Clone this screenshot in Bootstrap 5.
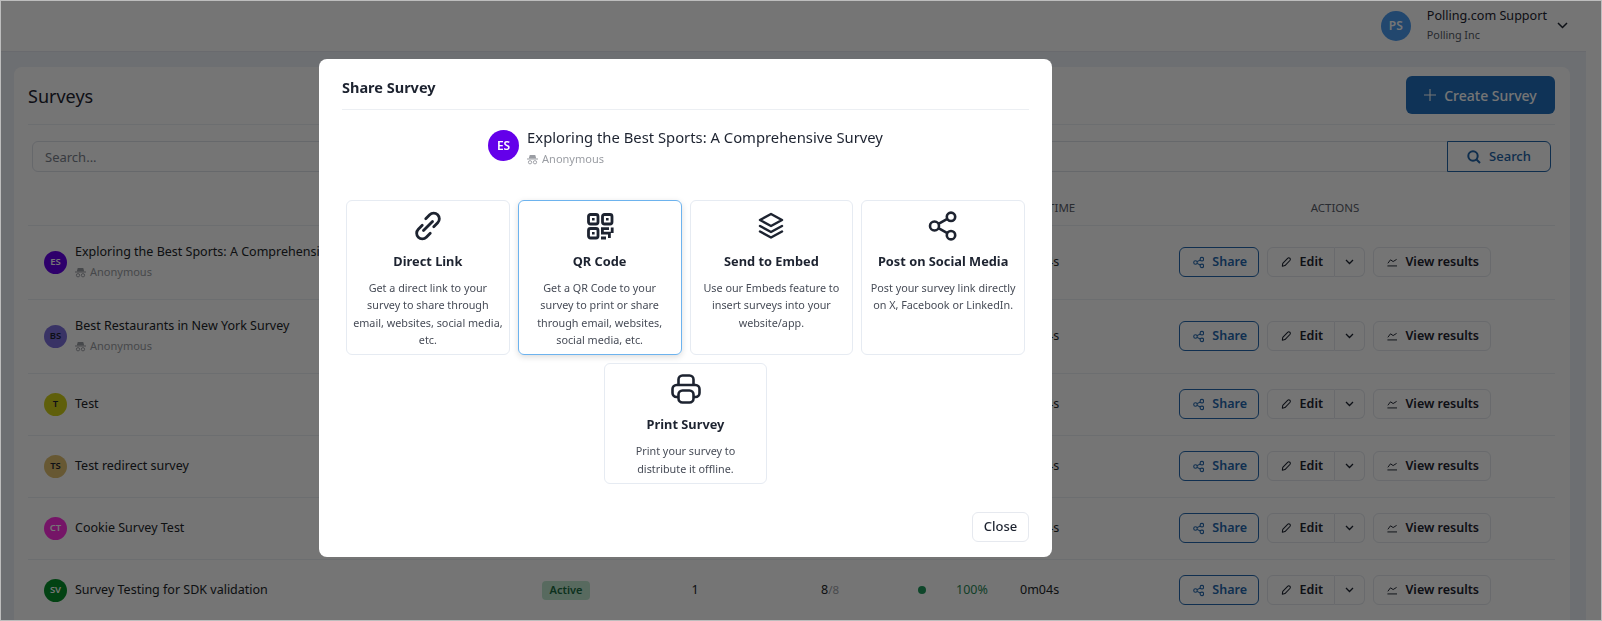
<!DOCTYPE html>
<html lang="en">
<head>
<meta charset="UTF-8">
<title>Surveys</title>
<link href="https://cdn.jsdelivr.net/npm/bootstrap@5.3.0/dist/css/bootstrap.min.css" rel="stylesheet">
<style>
    body {
        height: 621px;
        overflow: hidden;
        padding-right: 16px;
        background-color: #fff;
        color: #1d2330;
        font-family: "Noto Sans", sans-serif;
        font-size: 12.5px;
    }

    .topbar {
        height: 52px;
        padding-right: 18px;
        border-bottom: 1px solid #e4e8ef;
    }

    .user-avatar {
        width: 30px;
        height: 30px;
        font-size: 12px;
        font-weight: 600;
        background-color: #4a9bf0;
        color: #fff;
    }

    .user-name { font-size: 12.6px; line-height: 18px; margin-top: -1px; margin-right: 10px; }
    .user-org { font-size: 10.8px; line-height: 18px; margin-top: 1px; color: #555b66; }

    .main-area {
        height: 569px;
        padding: 15px 16px 0 14px;
        background-color: #eef2f8;
    }

    .survey-card {
        height: 100%;
        padding: 0 15px 0 14px;
        background-color: #fff;
        border-radius: 8px 8px 0 0;
    }

    .card-head {
        height: 58px;
        padding-bottom: 1px;
        border-bottom: 1px solid #eceff3;
    }

    .card-head h1 { font-size: 18px; font-weight: 400; margin: 4px 0 0; }

    .btn-create {
        width: 149px;
        height: 38px;
        font-size: 14px;
        font-weight: 500;
        background-color: #2270bd;
        color: #fff;
        border-radius: 6px;
    }

    .search-row { margin: 16px 4px 0 4px; width: 1519px; }
    .search-row .form-control { height: 31px; font-size: 13px; border-color: #dfe3ea; border-radius: 6px 0 0 6px; }
    .search-row .form-control::placeholder { color: #7b818c; }

    .btn-search {
        width: 104px;
        height: 31px;
        padding: 0;
        font-size: 13px;
        font-weight: 500;
        color: #2264a8;
        border: 1px solid #2264a8;
        border-radius: 0 6px 6px 0;
    }

    .survey-table { table-layout: fixed; width: 1527px; margin: 0; }
    .survey-table th {
        height: 53px;
        padding: 0 0 8px 0;
        vertical-align: bottom;
        font-size: 11.5px;
        font-weight: 400;
        color: #5b606b;
        border-bottom: 1px solid #eceff3;
    }
    .survey-table td { padding: 0; vertical-align: middle; border-bottom: 1px solid #eceff3; font-size: 12.5px; color: inherit; }
    .survey-table tr.tall td { height: 74px; }
    .survey-table tr.short td { height: 62px; }

    .row-avatar {
        width: 23px;
        height: 23px;
        font-size: 9.5px;
        font-weight: 600;
        flex-shrink: 0;
    }

    .row-title { line-height: 18px; white-space: nowrap; }
    .row-anon { font-size: 11px; line-height: 18px; margin-top: 2px; color: #9a9da3; }

    .status-pill {
        width: 48px;
        height: 19px;
        font-size: 11px;
        font-weight: 600;
        background-color: #c0e8d0;
        color: #1b6b42;
        border-radius: 4px;
    }

    .rate-dot { width: 8px; height: 8px; background-color: #1f9a5c; }
    .rate-text { color: #2a8a58; margin-left: 30px; }
    .muted-total { color: #a0a3a9; font-size: 11.5px; }

    .act-btn {
        height: 30px;
        padding: 0 11px 0 13px;
        font-size: 12.5px;
        font-weight: 600;
        color: #1d2330;
        background: #fff;
        border: 1px solid #e4e7ed;
        border-radius: 6px;
        white-space: nowrap;
    }
    .act-share { width: 80px; color: #2468ae; border-color: #2468ae; }
    .act-edit { width: 68px; border-radius: 6px 0 0 6px; }
    .act-more { width: 30px; padding: 0; border-left: 0; border-radius: 0 6px 6px 0; }
    .act-view { width: 118px; }

    .modal-backdrop.show { opacity: .54; }
    .window-frame { position: fixed; inset: 0; z-index: 2000; border: 1px solid #bdbdbd; pointer-events: none; }
    .share-dialog { max-width: none; width: 733px; margin: 59px 0 0 319px; }
    .share-dialog .modal-content { border: 0; border-radius: 8px; color: #1d2330; }
    .share-dialog .modal-header { height: 51px; margin: 0 23px; padding: 0; border-bottom: 1px solid #eceff3; }
    .share-dialog .modal-title { font-size: 14.5px; font-weight: 700; line-height: 20px; margin-top: 5px; }
    .share-dialog .modal-body { padding: 0 26.500px; }
    .share-dialog .modal-footer { padding: 28px 23px 15px; border: 0; }

    .survey-head { height: 90px; padding-top: 17px; }
    .head-avatar { width: 31px; height: 31px; font-size: 12px; font-weight: 600; margin-top: 3px; background-color: #6400ea; color: #fff; }
    .head-title { font-size: 14.8px; line-height: 20px; }
    .head-anon { font-size: 11px; line-height: 18px; margin-top: 3px; color: #9a9da3; }

    .share-tile {
        width: 163.750px;
        padding: 9px 3px 6px;
        border: 1px solid #e6ebf2;
        border-radius: 6px;
        text-align: center;
    }
    .share-tile svg { display: block; margin: 0 auto; }
    .share-tile h6 { font-size: 12.8px; font-weight: 700; line-height: 20px; margin: 9px 0 8px; }
    .share-tile p { font-size: 10.8px; line-height: 17.33px; margin: 0; color: #474c57; }
    .share-tile.picked { border: 1px solid #6db3ee; box-shadow: 0 2px 6px rgba(0, 0, 0, .14); }

    .btn-close-share {
        width: 57px;
        height: 30px;
        margin: 0;
        padding: 0;
        font-size: 13px;
        font-weight: 500;
        color: #1d2330;
        border: 1px solid #e6e9ef;
        border-radius: 6px;
    }
</style>
</head>
<body>
    <div class="topbar d-flex justify-content-end align-items-center">
        <div class="user-avatar rounded-circle d-flex align-items-center justify-content-center me-3">PS</div>
        <div>
            <div class="user-name">Polling.com Support</div>
            <div class="user-org">Polling Inc</div>
        </div>
        <svg width="11" height="7" viewBox="0 0 11 7" fill="none" stroke="#1d2330" stroke-width="1.5"><path d="M1 1l4.500 4.500L10 1"/></svg>
    </div>

    <div class="main-area">
        <div class="survey-card">
            <div class="card-head d-flex justify-content-between align-items-center">
                <h1>Surveys</h1>
                <button class="btn btn-create d-flex align-items-center justify-content-center gap-2">
                    <svg width="12" height="12" viewBox="0 0 12 12" stroke="#fff" stroke-width="1.100"><path d="M6 0v12M0 6h12"/></svg>
                    Create Survey
                </button>
            </div>
            <div class="search-row input-group">
                <input class="form-control" placeholder="Search...">
                <button class="btn btn-search d-flex align-items-center justify-content-center gap-2">
                    <svg width="14" height="14" viewBox="0 0 14 14" fill="none" stroke="#2264a8" stroke-width="2"><circle cx="6" cy="6" r="4.700"/><path d="M9.500 9.500L13 13"/></svg>
                    Search
                </button>
            </div>
            <table class="table survey-table">
                <colgroup>
                    <col style="width:472px"><col style="width:132px"><col style="width:126px"><col style="width:144px"><col style="width:102px"><col style="width:111px"><col style="width:440px">
                </colgroup>
                <thead>
                    <tr>
                        <th></th>
                        <th></th>
                        <th></th>
                        <th></th>
                        <th></th>
                        <th class="ps-3">AVG. TIME</th>
                        <th class="text-center">ACTIONS</th>
                    </tr>
                </thead>
                <tbody id="surveyRows"></tbody>
            </table>
        </div>
    </div>

    <div class="modal-backdrop show"></div>

    <div class="modal d-block">
        <div class="modal-dialog share-dialog">
            <div class="modal-content">
                <div class="modal-header">
                    <h5 class="modal-title">Share Survey</h5>
                </div>
                <div class="modal-body">
                    <div class="survey-head d-flex justify-content-center gap-2">
                        <div class="head-avatar rounded-circle d-flex align-items-center justify-content-center">ES</div>
                        <div>
                            <div class="head-title">Exploring the Best Sports: A Comprehensive Survey</div>
                            <div class="head-anon d-flex align-items-center gap-1"><svg width="11" height="11" viewBox="0 0 12 12" fill="#9a9da3"><path d="M3 1h6l1 3.500H2zM0 5h12v1H0z"/><circle cx="3.300" cy="9" r="1.800" fill="none" stroke="#9a9da3"/><circle cx="8.700" cy="9" r="1.800" fill="none" stroke="#9a9da3"/></svg> Anonymous</div>
                        </div>
                    </div>
                    <div class="d-flex flex-wrap justify-content-center gap-2">
                        <div class="share-tile">
                            <svg width="32" height="32" viewBox="14 14 228 228" fill="none" stroke="#1d2330" stroke-width="20" stroke-linecap="round"><path d="M96 160l64-64"/><path d="M144 180l-28 28a40 40 0 0 1-57-57l28-28"/><path d="M112 76l28-28a40 40 0 0 1 57 57l-28 28"/></svg>
                            <h6>Direct Link</h6>
                            <p>Get a direct link to your<br>survey to share through<br>email, websites, social media,<br>etc.</p>
                        </div>
                        <div class="share-tile picked">
                            <svg width="32" height="32" viewBox="0 0 32 32" fill="none" stroke="#1d2330" stroke-width="2.800"><rect x="4.500" y="4.500" width="9.500" height="9.500" rx="2"/><rect x="18.500" y="4.500" width="9.500" height="9.500" rx="2"/><rect x="4.500" y="18.500" width="9.500" height="9.500" rx="2"/><path d="M8 9.200h2.600M22 9.200h2.600M8 23.200h2.600" stroke-width="2.600"/><path d="M17 18.600h8M18.400 18.600v4.600h7v4.800M17 28h5M28.200 17.400v5.600"/></svg>
                            <h6>QR Code</h6>
                            <p>Get a QR Code to your<br>survey to print or share<br>through email, websites,<br>social media, etc.</p>
                        </div>
                        <div class="share-tile">
                            <svg width="32" height="32" viewBox="0 0 32 32" fill="none" stroke="#1d2330" stroke-width="2.500" stroke-linejoin="round" stroke-linecap="round"><path d="M16 4l11 6-11 6-11-6z"/><path d="M5 16l11 6 11-6"/><path d="M5 21.500l11 6 11-6"/></svg>
                            <h6>Send to Embed</h6>
                            <p>Use our Embeds feature to<br>insert surveys into your<br>website/app.</p>
                        </div>
                        <div class="share-tile">
                            <svg width="32" height="32" viewBox="0 0 32 32" fill="none" stroke="#1d2330" stroke-width="2.600"><circle cx="7.500" cy="16" r="4.500"/><circle cx="24" cy="6.800" r="4.200"/><circle cx="24" cy="25.200" r="4.200"/><path d="M11.500 13.800l8.800-5M11.500 18.200l8.800 5"/></svg>
                            <h6>Post on Social Media</h6>
                            <p>Post your survey link directly<br>on X, Facebook or LinkedIn.</p>
                        </div>
                        <div class="share-tile">
                            <svg width="32" height="32" viewBox="0 0 32 32" fill="none" stroke="#1d2330" stroke-width="2.600" stroke-linejoin="round"><path d="M8.500 12V6.500a4 4 0 0 1 4-4h7a4 4 0 0 1 4 4V12"/><path d="M8.500 24H6.500a4 4 0 0 1-4-4v-4a4 4 0 0 1 4-4h19a4 4 0 0 1 4 4v4a4 4 0 0 1-4 4h-2"/><rect x="8.500" y="17.500" width="15" height="12" rx="4"/></svg>
                            <h6>Print Survey</h6>
                            <p>Print your survey to<br>distribute it offline.</p>
                        </div>
                    </div>
                </div>
                <div class="modal-footer">
                    <button class="btn btn-close-share">Close</button>
                </div>
            </div>
        </div>
    </div>

    <div class="window-frame"></div>

    <script>
        // only the last row shows its stats, the dialog covers the others
        const surveys = [
            { initials: "ES", color: "#6400ea", text: "#fff", title: "Exploring the Best Sports: A Comprehensive Survey", anon: true },
            { initials: "BS", color: "#7c6fdc", text: "#1d2330", title: "Best Restaurants in New York Survey", anon: true },
            { initials: "T", color: "#d0d01a", text: "#1d2330", title: "Test" },
            { initials: "TS", color: "#e0c070", text: "#1d2330", title: "Test redirect survey" },
            { initials: "CT", color: "#ff2ee0", text: "#fff", title: "Cookie Survey Test" },
            { initials: "SV", color: "#05902a", text: "#fff", title: "Survey Testing for SDK validation", stats: true }
        ];

        const spyIcon = '<svg width="11" height="11" viewBox="0 0 12 12" fill="#9a9da3"><path d="M3 1h6l1 3.500H2zM0 5h12v1H0z"/><circle cx="3.300" cy="9" r="1.800" fill="none" stroke="#9a9da3"/><circle cx="8.700" cy="9" r="1.800" fill="none" stroke="#9a9da3"/></svg>';

        const statCells = `
                <td class="text-center"><span class="status-pill d-inline-flex align-items-center justify-content-center">Active</span></td>
                <td class="text-center">1</td>
                <td class="text-center">8<span class="muted-total">/8</span></td>
                <td><span class="d-flex align-items-center ps-3"><span class="rate-dot rounded-circle"></span><span class="rate-text">100%</span></span></td>`;

        document.getElementById('surveyRows').innerHTML = surveys.map(s => `
            <tr class="${ s.anon ? 'tall' : 'short' }">
                <td class="ps-3">
                    <div class="d-flex align-items-center gap-2">
                        <div class="row-avatar rounded-circle d-flex align-items-center justify-content-center" style="background-color:${ s.color };color:${ s.text }">${ s.initials }</div>
                        <div>
                            <div class="row-title">${ s.title }</div>
                            ${ s.anon ? `<div class="row-anon d-flex align-items-center gap-1">${ spyIcon } Anonymous</div>` : '' }
                        </div>
                    </div>
                </td>
                ${ s.stats ? statCells : '<td></td><td></td><td></td><td></td>' }
                <td class="ps-3">0m04s</td>
                <td>
                    <div class="d-flex justify-content-center gap-2">
                        <button class="act-share act-btn d-flex align-items-center gap-2">
                            <svg width="13" height="13" viewBox="0 0 32 32" fill="none" stroke="#2468ae" stroke-width="3"><circle cx="7" cy="16" r="5"/><circle cx="25" cy="6.500" r="5"/><circle cx="25" cy="25.500" r="5"/><path d="M11.500 13.600l9-4.700M11.500 18.400l9 4.700"/></svg>
                            Share
                        </button>
                        <div class="d-flex">
                            <button class="act-edit act-btn d-flex align-items-center gap-2">
                                <svg width="12" height="12" viewBox="0 0 12 12" fill="none" stroke="#1d2330" stroke-width="1.200" stroke-linejoin="round"><path d="M2 7.500L7.500 1.800a1.800 1.800 0 0 1 2.600 2.500L4.500 10 1.500 10.800z"/></svg>
                                Edit
                            </button>
                            <button class="act-more act-btn">
                                <svg width="9" height="6" viewBox="0 0 9 6" fill="none" stroke="#1d2330" stroke-width="1.300"><path d="M1 1l3.500 3.500L8 1"/></svg>
                            </button>
                        </div>
                        <button class="act-view act-btn d-flex align-items-center gap-2">
                            <svg width="12" height="12" viewBox="0 0 12 12" fill="none" stroke="#1d2330" stroke-width="1.100"><path d="M1 7.500L4 3.500l3 2 4-2.500M.500 10.500h11"/></svg>
                            View results
                        </button>
                    </div>
                </td>
            </tr>`).join('');
    </script>
</body>
</html>
